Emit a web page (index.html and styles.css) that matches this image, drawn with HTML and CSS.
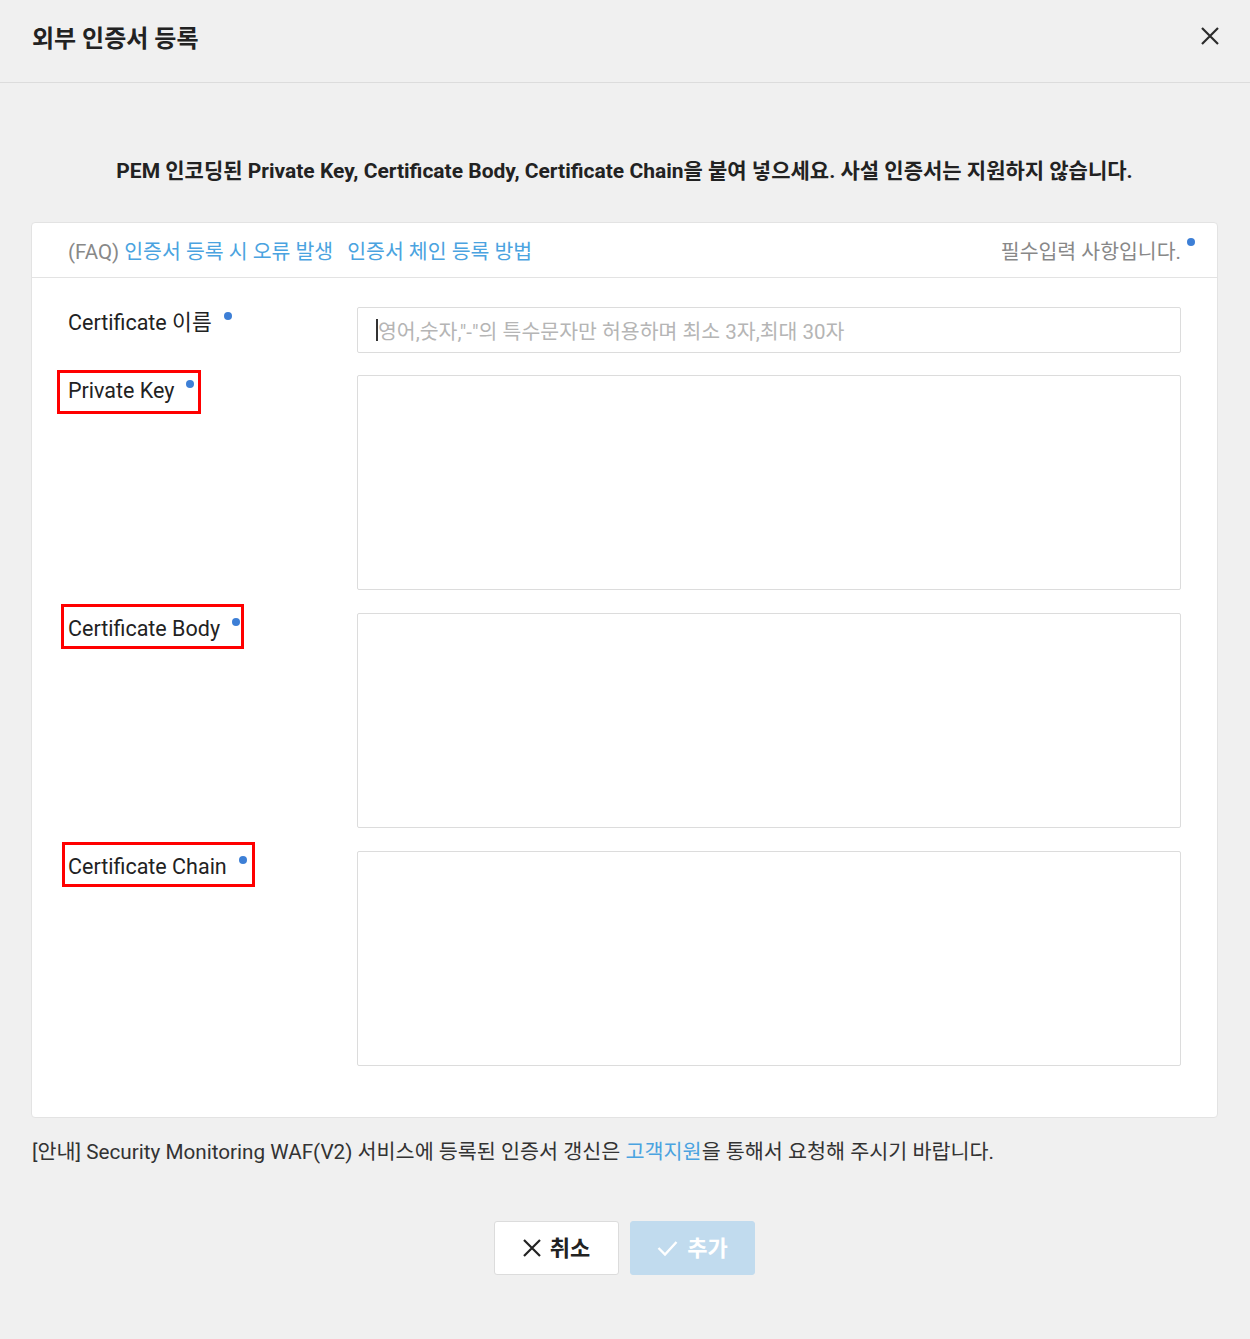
FILE: index.html
```html
<!DOCTYPE html>
<html lang="ko">
<head>
<meta charset="utf-8">
<title>외부 인증서 등록</title>
<link rel="stylesheet" href="styles.css">
</head>
<body>
<div class="modal">
  <header class="modal-header">
    <h1 class="modal-title">외부 인증서 등록</h1>
    <button class="close-btn" aria-label="닫기">
      <svg width="20" height="20" viewBox="0 0 20 20"><path d="M2 2 L18 18 M18 2 L2 18" stroke="#2b2b2b" stroke-width="2.2" fill="none"/></svg>
    </button>
  </header>
  <main class="modal-body">
    <p class="intro">PEM 인코딩된 Private Key, Certificate Body, Certificate Chain을 붙여 넣으세요. 사설 인증서는 지원하지 않습니다.</p>
    <section class="card">
      <div class="card-head">
        <div class="faq"><span class="faq-tag">(FAQ)</span> <a class="link">인증서 등록 시 오류 발생</a><a class="link link-gap">인증서 체인 등록 방법</a></div>
        <div class="req-note">필수입력 사항입니다.<span class="dot dot-note"></span></div>
      </div>
      <div class="form">
        <div class="row">
          <label class="label">Certificate 이름<span class="dot"></span></label>
          <div class="input"><span class="caret"></span><span class="placeholder">영어,숫자,"-"의 특수문자만 허용하며 최소 3자,최대 30자</span></div>
        </div>
        <div class="row row-tall">
          <label class="label">Private Key<span class="dot"></span><span class="mark mark-key"></span></label>
          <div class="textarea"></div>
        </div>
        <div class="row row-tall">
          <label class="label">Certificate Body<span class="dot"></span><span class="mark mark-body"></span></label>
          <div class="textarea"></div>
        </div>
        <div class="row row-tall">
          <label class="label">Certificate Chain<span class="dot"></span><span class="mark mark-chain"></span></label>
          <div class="textarea"></div>
        </div>
      </div>
    </section>
    <p class="notice">[안내] Security Monitoring WAF(V2) 서비스에 등록된 인증서 갱신은 <a class="link">고객지원</a>을 통해서 요청해 주시기 바랍니다.</p>
    <div class="actions">
      <button class="btn btn-cancel">
        <svg width="18" height="18" viewBox="0 0 18 18"><path d="M1 1 L17 17 M17 1 L1 17" stroke="#222" stroke-width="2.2" fill="none"/></svg>
        <span>취소</span>
      </button>
      <button class="btn btn-add">
        <svg width="21" height="18" viewBox="0 0 21 18"><path d="M1.5 9 L8 15.5 L19.5 3" stroke="#fff" stroke-width="2.4" fill="none"/></svg>
        <span>추가</span>
      </button>
    </div>
  </main>
</div>
</body>
</html>
```

FILE: styles.css
```css
* { box-sizing: border-box; }
html, body { margin: 0; padding: 0; }
body {
  background: #f0f0f0;
  font-family: "Roboto", "Noto Sans CJK KR", sans-serif;
  color: #333;
  width: 1250px;
  height: 1339px;
  overflow: hidden;
}
.modal-header {
  height: 83px;
  border-bottom: 1px solid #dcdcdc;
  display: flex;
  align-items: center;
  justify-content: space-between;
  padding: 0 30px 10px 32px;
}
.modal-title {
  margin: 0;
  font-size: 24px;
  font-weight: 700;
  color: #222;
}
.close-btn {
  background: none;
  border: 0;
  padding: 0;
  width: 20px;
  height: 20px;
  display: flex;
}
.modal-body { padding: 0 32px 0 31px; }
.intro {
  margin: 74px 0 0;
  text-align: center;
  font-size: 21px;
  font-weight: 700;
  color: #222;
  line-height: 28px;
}
.card {
  margin-top: 37px;
  background: #fff;
  border: 1px solid #e3e3e3;
  border-radius: 4px;
}
.card-head {
  height: 55px;
  border-bottom: 1px solid #e3e3e3;
  display: flex;
  align-items: center;
  justify-content: space-between;
  padding: 0 22px 0 36px;
  font-size: 20.5px;
}
.faq-tag { color: #888; }
.link { color: #4aa3e0; text-decoration: none; }
.link-gap { margin-left: 14px; }
.req-note {
  color: #888;
  position: relative;
  padding-right: 14px;
}
.dot {
  display: inline-block;
  width: 8px;
  height: 8px;
  border-radius: 50%;
  background: #3d7fd6;
  margin-left: 12px;
  vertical-align: 10px;
}
.dot-note {
  position: absolute;
  right: 0;
  top: 3px;
  margin: 0;
}
.form {
  padding: 29px 36px 51px 36px;
  display: flex;
  flex-direction: column;
}
.row {
  display: grid;
  grid-template-columns: 289px 1fr;
  align-items: start;
}
.row-tall { margin-top: 22px; }
.row-tall + .row-tall { margin-top: 23px; }
.label {
  font-size: 21.5px;
  line-height: 32px;
  color: #222;
  position: relative;
  justify-self: start;
}
.mark {
  position: absolute;
  border: 3px solid #f00;
}
.mark-key { left: -11px; top: -5px; width: 144px; height: 44px; }
.mark-body { left: -7px; top: -9px; width: 183px; height: 45px; }
.mark-chain { left: -6px; top: -9px; width: 193px; height: 45px; }
.input {
  height: 46px;
  border: 1px solid #dcdcdc;
  border-radius: 2px;
  display: flex;
  align-items: center;
  padding-left: 18px;
}
.caret {
  width: 2px;
  height: 22px;
  background: #333;
}
.placeholder {
  color: #b5b5b5;
  font-size: 20.5px;
}
.textarea {
  height: 215px;
  border: 1px solid #dcdcdc;
  border-radius: 2px;
}
.notice {
  margin: 20px 0 0 1px;
  font-size: 20.7px;
  line-height: 28px;
  color: #333;
}
.actions {
  display: flex;
  justify-content: center;
  gap: 11px;
  margin-top: 55px;
}
.btn {
  width: 125px;
  height: 54px;
  border-radius: 3px;
  display: flex;
  align-items: center;
  justify-content: center;
  gap: 9px;
  font-family: inherit;
  font-size: 22px;
  font-weight: 700;
  padding: 0 0 4px;
}
.btn svg { margin-top: 4px; }
.btn-cancel {
  background: #fff;
  border: 1px solid #dcdcdc;
  color: #222;
}
.btn-add {
  background: #c1dbee;
  border: 1px solid #c1dbee;
  color: #fff;
}
```
